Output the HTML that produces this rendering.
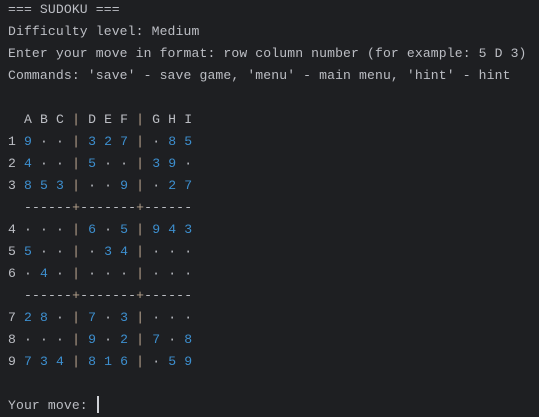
<!DOCTYPE html>
<html><head><style>
html,body{margin:0;padding:0;background:#1e1f22;width:539px;height:417px;overflow:hidden}
pre{margin:0;position:absolute;left:8px;top:-1px;font-family:"Liberation Mono",monospace;font-size:13.1px;line-height:22px;color:#bcbec4;letter-spacing:0.12px}
.b{letter-spacing:0.15px}
.n{color:#3d8fcf}
.p{color:#b8a48e}
.cur{display:inline-block;width:2px;height:17px;background:#cfd1d6;vertical-align:-4px;margin-left:1px}
</style></head><body>
<pre>=== SUDOKU ===
Difficulty level: Medium
Enter your move in format: row column number (for example: 5 D 3)
Commands: 'save' - save game, 'menu' - main menu, 'hint' - hint

<span class="b">  A B C <span class="p">|</span> D E F <span class="p">|</span> G H I
1 <span class="n">9</span> · · <span class="p">|</span> <span class="n">3 2 7</span> <span class="p">|</span> · <span class="n">8 5</span>
2 <span class="n">4</span> · · <span class="p">|</span> <span class="n">5</span> · · <span class="p">|</span> <span class="n">3 9</span> ·
3 <span class="n">8 5 3</span> <span class="p">|</span> · · <span class="n">9</span> <span class="p">|</span> · <span class="n">2 7</span>
  ------<span class="p">+</span>-------<span class="p">+</span>------
4 · · · <span class="p">|</span> <span class="n">6</span> · <span class="n">5</span> <span class="p">|</span> <span class="n">9 4 3</span>
5 <span class="n">5</span> · · <span class="p">|</span> · <span class="n">3 4</span> <span class="p">|</span> · · ·
6 · <span class="n">4</span> · <span class="p">|</span> · · · <span class="p">|</span> · · ·
  ------<span class="p">+</span>-------<span class="p">+</span>------
7 <span class="n">2 8</span> · <span class="p">|</span> <span class="n">7</span> · <span class="n">3</span> <span class="p">|</span> · · ·
8 · · · <span class="p">|</span> <span class="n">9</span> · <span class="n">2</span> <span class="p">|</span> <span class="n">7</span> · <span class="n">8</span>
9 <span class="n">7 3 4</span> <span class="p">|</span> <span class="n">8 1 6</span> <span class="p">|</span> · <span class="n">5 9</span></span>

Your move: <span class="cur"></span></pre>
</body></html>
